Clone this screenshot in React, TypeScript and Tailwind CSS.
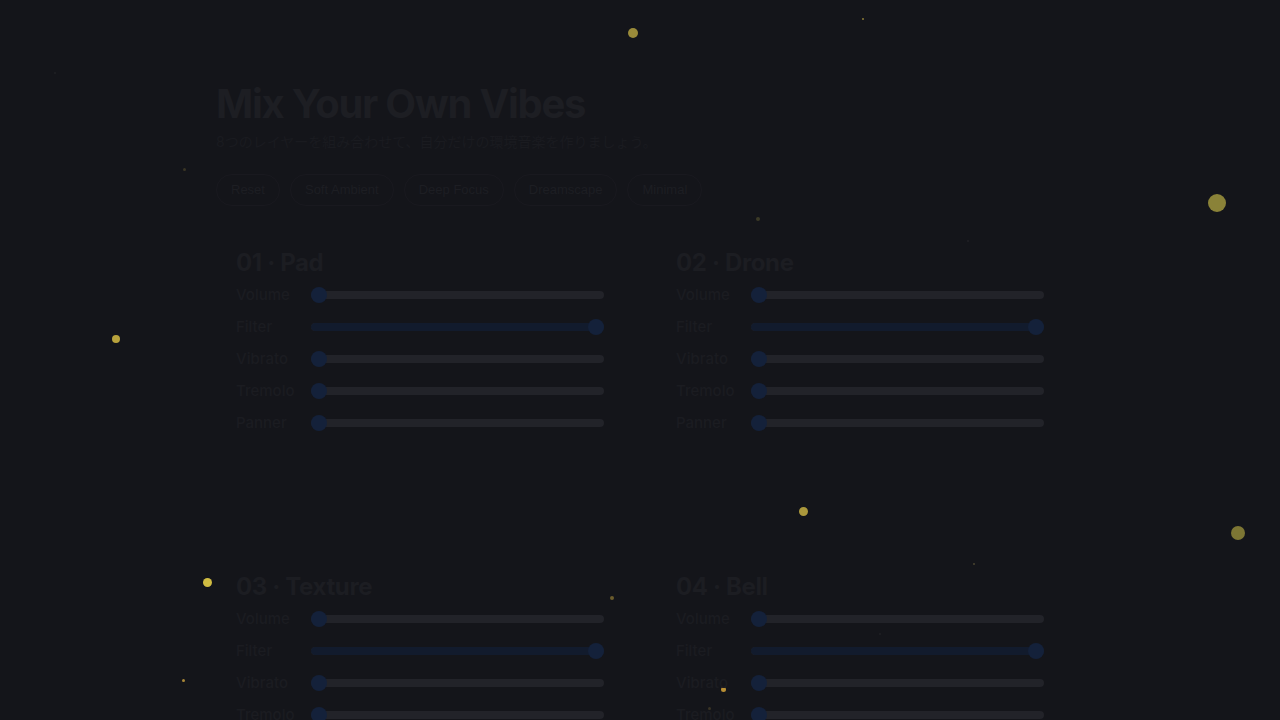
import { CSSProperties } from 'react'

type Layer = {
  id: string
  name: string
}

type Control = {
  label: string
  value: number
}

const layers: Layer[] = [
  { id: '01', name: 'Pad' },
  { id: '02', name: 'Drone' },
  { id: '03', name: 'Texture' },
  { id: '04', name: 'Bell' },
  { id: '05', name: 'Noise' },
  { id: '06', name: 'Pulse' },
  { id: '07', name: 'Chord' },
  { id: '08', name: 'Field' },
]

const controls: Control[] = [
  { label: 'Volume', value: 0 },
  { label: 'Filter', value: 100 },
  { label: 'Vibrato', value: 0 },
  { label: 'Tremolo', value: 0 },
  { label: 'Panner', value: 0 },
]

const presets = ['Reset', 'Soft Ambient', 'Deep Focus', 'Dreamscape', 'Minimal']

// x, y, diameter, colour
const fireflies: [number, number, number, string][] = [
  [633, 33, 10, '#9a8b3a'],
  [863, 19, 2, '#8a7a36'],
  [55, 73, 2, '#1f2024'],
  [184, 169, 3, '#3a3525'],
  [1217, 203, 18, '#8a8238'],
  [758, 219, 4, '#3b3a26'],
  [968, 241, 2, '#202126'],
  [116, 339, 8, '#b8a23c'],
  [803, 511, 9, '#ab983c'],
  [1238, 533, 14, '#7d7634'],
  [974, 564, 2, '#4a4430'],
  [207, 582, 9, '#d0bc42'],
  [612, 598, 4, '#6b5c2c'],
  [880, 634, 2, '#1f2025'],
  [183, 680, 3, '#a98738'],
  [723, 689, 5, '#b98f34'],
  [709, 708, 3, '#3a3425'],
]

const Slider = ({ value }: { value: number }) => {
  const fill: CSSProperties = { width: `${value}%` }
  const thumb: CSSProperties = { left: `calc(${value}% - ${(value / 100) * 16}px)` }
  return (
    <div className="relative flex-1 h-4 flex items-center">
      <div className="w-full h-2 rounded-full bg-[#222329] overflow-hidden">
        <div className="h-full rounded-full bg-[#121b2d]" style={fill} />
      </div>
      <div className="absolute top-0 w-4 h-4 rounded-full bg-[#14213a]" style={thumb} />
    </div>
  )
}

const LayerCard = ({ layer }: { layer: Layer }) => (
  <section className="p-5 min-h-[292px]">
    <h2 className="text-2xl leading-8 font-bold tracking-[-0.015em] text-[#1c1d22]">
      {layer.id} · {layer.name}
    </h2>
    <div className="flex flex-col">
      {controls.map((c) => (
        <div key={c.label} className="flex items-center h-8">
          <span className="w-[75px] shrink-0 text-[15px] font-medium text-[#1b1c21]">{c.label}</span>
          <Slider value={c.value} />
        </div>
      ))}
    </div>
  </section>
)

export default function App() {
  return (
    <div
      className="relative min-h-screen bg-[#14151a] overflow-hidden"
      style={{ fontFamily: 'Inter, "Noto Sans CJK JP", sans-serif' }}
    >
      <div className="pointer-events-none absolute inset-0">
        {fireflies.map(([x, y, d, color], idx) => (
          <span
            key={idx}
            className="absolute rounded-full"
            style={{ left: x - d / 2, top: y - d / 2, width: d, height: d, background: color }}
          />
        ))}
      </div>

      <main className="relative max-w-4xl mx-auto px-6 pt-[80px] pb-16">
        <h1 className="text-[40px] leading-[48px] font-bold tracking-[-0.032em] text-[#1d1e23]">
          Mix Your Own Vibes
        </h1>
        <p className="mt-1 text-sm leading-5 text-[#1a1b20]">
          8つのレイヤーを組み合わせて、自分だけの環境音楽を作りましょう。
        </p>

        <div className="mt-[22px] flex gap-2.5">
          {presets.map((p) => (
            <button
              key={p}
              type="button"
              className="h-8 px-3.5 rounded-full border border-[#19191f] text-[13px] text-[#1d1e23] font-['Liberation_Sans',Arial,sans-serif]"
            >
              {p}
            </button>
          ))}
        </div>

        <div className="mt-[21px] grid grid-cols-2 gap-8">
          {layers.map((l) => (
            <LayerCard key={l.id} layer={l} />
          ))}
        </div>
      </main>
    </div>
  )
}
